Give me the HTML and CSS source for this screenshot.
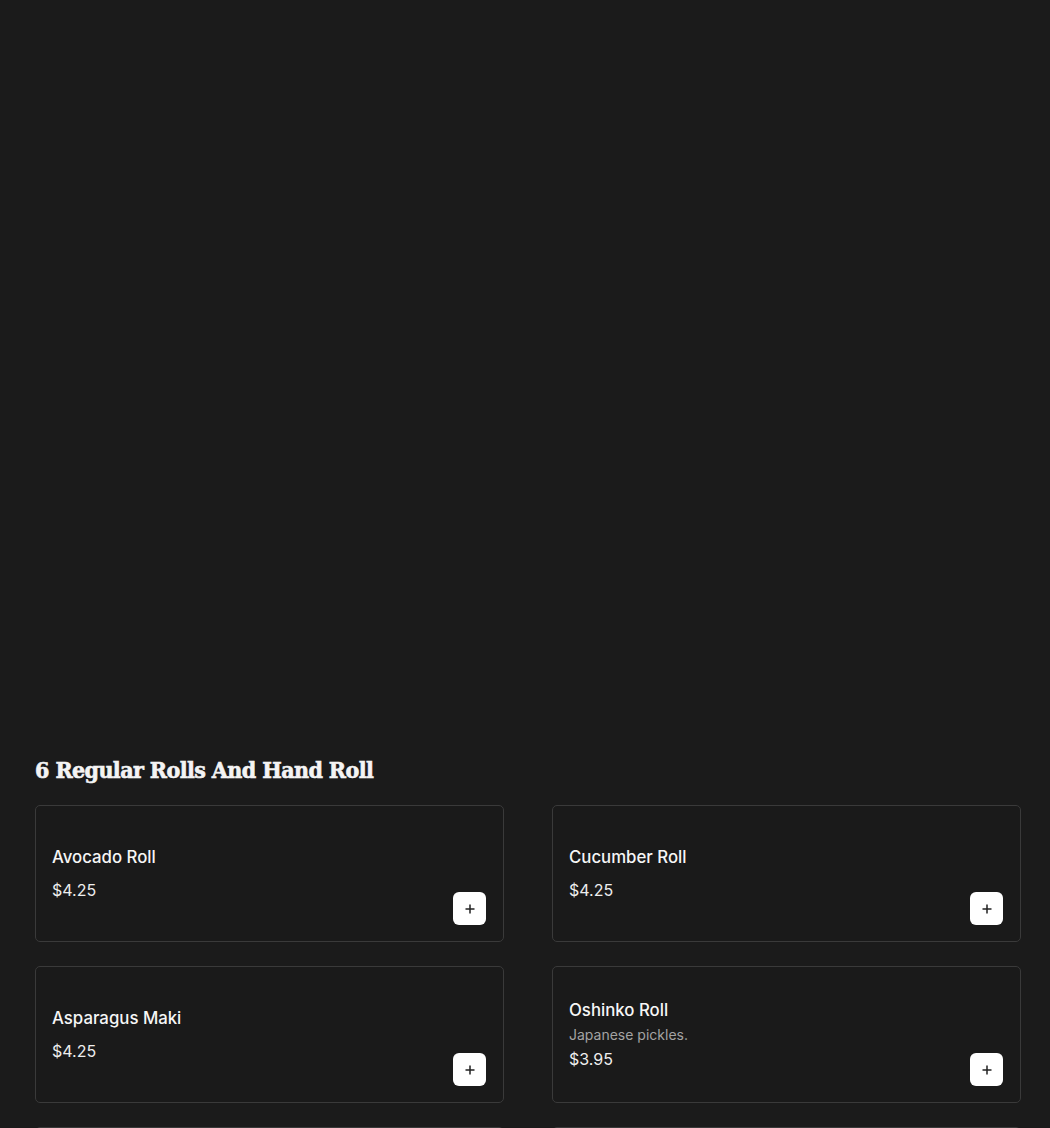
FILE: index.html
```html
<!DOCTYPE html>
<html lang="en">
<head>
<meta charset="utf-8">
<title>Menu</title>
<link rel="stylesheet" href="styles.css">
</head>
<body>
<div class="hero"></div>
<section class="menu-section">
  <h2 class="section-title">6 Regular Rolls And Hand Roll</h2>
  <div class="grid">
    <div class="card">
      <div class="info">
        <div class="name">Avocado Roll</div>
        <div class="price">$4.25</div>
      </div>
      <button class="add" aria-label="Add"><svg viewBox="0 0 12 12" width="12" height="12"><path d="M6 1.5v9M1.5 6h9" stroke="#222" stroke-width="1.5" fill="none"/></svg></button>
    </div>
    <div class="card">
      <div class="info">
        <div class="name">Cucumber Roll</div>
        <div class="price">$4.25</div>
      </div>
      <button class="add" aria-label="Add"><svg viewBox="0 0 12 12" width="12" height="12"><path d="M6 1.5v9M1.5 6h9" stroke="#222" stroke-width="1.5" fill="none"/></svg></button>
    </div>
    <div class="card">
      <div class="info">
        <div class="name">Asparagus Maki</div>
        <div class="price">$4.25</div>
      </div>
      <button class="add" aria-label="Add"><svg viewBox="0 0 12 12" width="12" height="12"><path d="M6 1.5v9M1.5 6h9" stroke="#222" stroke-width="1.5" fill="none"/></svg></button>
    </div>
    <div class="card">
      <div class="info">
        <div class="name">Oshinko Roll</div>
        <div class="desc">Japanese pickles.</div>
        <div class="price">$3.95</div>
      </div>
      <button class="add" aria-label="Add"><svg viewBox="0 0 12 12" width="12" height="12"><path d="M6 1.5v9M1.5 6h9" stroke="#222" stroke-width="1.5" fill="none"/></svg></button>
    </div>
    <div class="card"></div>
    <div class="card"></div>
  </div>
</section>
</body>
</html>
```
FILE: styles.css
```css
html, body {
  margin: 0;
  padding: 0;
  background: #1b1b1b;
  color: #f2f2f2;
  font-family: "Inter", "Open Sans", sans-serif;
}
.hero {
  height: 752px;
}
.menu-section {
  padding: 0 29px 0 35px;
}
.section-title {
  margin: 0 0 17px;
  font-family: "DejaVu Serif Condensed", "DejaVu Serif", serif;
  font-stretch: condensed;
  font-weight: 800;
  font-size: 23px;
  line-height: 36px;
  color: #f4f4f4;
  letter-spacing: -0.6px;
  -webkit-text-stroke: 0.6px #f4f4f4;
}
.grid {
  display: grid;
  grid-template-columns: 1fr 1fr;
  column-gap: 48px;
  row-gap: 24px;
}
.card {
  box-sizing: border-box;
  height: 137px;
  border: 1px solid #3a3a3a;
  border-radius: 5px;
  background: #1a1a1a;
  padding: 16px 17px 16px 16px;
  display: flex;
  justify-content: space-between;
}
.info {
  align-self: center;
  display: flex;
  flex-direction: column;
}
.name {
  font-size: 16.8px;
  font-weight: 500;
  line-height: 22px;
  color: #f6f6f6;
}
.desc {
  margin-top: 3px;
  font-size: 14px;
  line-height: 21px;
  color: #a3a3a3;
}
.price {
  margin-top: 11px;
  font-size: 16px;
  font-weight: 400;
  line-height: 22px;
  color: #eeeeee;
}
.desc + .price {
  margin-top: 3px;
}
.add {
  align-self: flex-end;
  width: 33px;
  height: 33px;
  border: none;
  border-radius: 6px;
  background: #ffffff;
  padding: 0;
  display: flex;
  align-items: center;
  justify-content: center;
  cursor: pointer;
}
```
